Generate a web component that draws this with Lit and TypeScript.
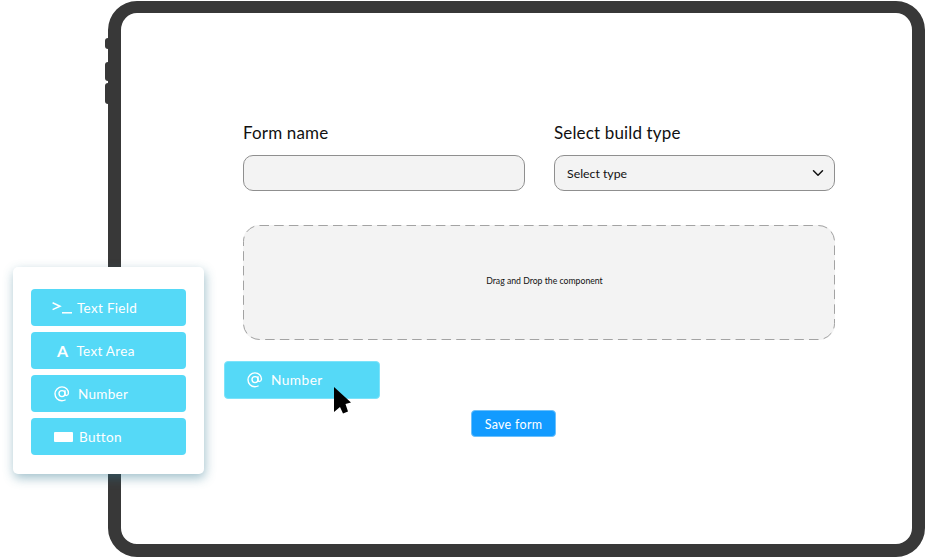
import { LitElement, html, css, svg } from "lit";
import { customElement } from "lit/decorators.js";

const atIcon = (size: number) => html`<svg class="ico" width=${size} height=${size} viewBox="0 0 16 16" fill="none" stroke="#fff" stroke-width="1.4" stroke-linecap="round">
  <circle cx="8" cy="7.6" r="3"/>
  <path d="M11 4.800v3.600c0 1.400 3 1.600 3.400-.9C14.800 3.600 11.500 .9 8 .9 4.200 .9 1 4 1 7.800c0 3.900 3.100 6.900 6.900 6.900 1.200 0 2.300-.2 3.200-.7"/>
</svg>`;

const promptIcon = html`<svg class="ico" width="20" height="13" viewBox="0 0 20 13" fill="none" stroke="#fff" stroke-width="1.500">
  <path d="M.6 1.800 8 5.200 .6 8.600" />
  <path d="M10 11.800h10" />
</svg>`;

const items = [
  { label: "Text Field", cls: "tf", icon: promptIcon },
  { label: "Text Area", cls: "ta", icon: html`<span class="big-a">A</span>` },
  { label: "Number", cls: "nu", icon: atIcon(16) },
  { label: "Button", cls: "bu", icon: html`<span class="btn-ico"></span>` },
];

@customElement("app-root")
export class AppRoot extends LitElement {
  static styles = css`
    :host {
      display: block;
      width: 925px;
      height: 557px;
      position: relative;
      overflow: hidden;
      background: #fff;
      font-family: "Lato", "Open Sans", sans-serif;
      color: #111;
    }
    .device {
      position: absolute;
      left: 108px;
      top: 1px;
      width: 817px;
      height: 556px;
      box-sizing: border-box;
      border: 13px solid #383838;
      border-top-width: 12px;
      border-radius: 29px;
      background: #fff;
      padding: 109px 77px 0 122px;
    }
    .side {
      position: absolute;
      left: -16px;
      width: 6px;
      background: #383838;
      border-radius: 3px 0 0 3px;
    }
    .s1 { top: 25px; height: 11px; }
    .s2 { top: 49px; height: 19px; }
    .s3 { top: 70px; height: 21px; }
    .fields {
      display: grid;
      grid-template-columns: 282px 281px;
      column-gap: 29px;
    }
    .field {
      display: flex;
      flex-direction: column;
      gap: 11px;
    }
    .label {
      font-size: 17px;
      line-height: 22px;
      color: #111;
      letter-spacing: 0.15px;
    }
    .input {
      box-sizing: border-box;
      height: 36px;
      background: #f3f3f3;
      border: 1px solid #8f8f8f;
      border-radius: 10px;
      display: flex;
      align-items: center;
      justify-content: space-between;
      padding: 0 10px 0 12px;
      font-size: 12.3px;
      color: #111;
    }
    .zone {
      position: relative;
      margin-top: 34px;
      height: 115px;
      box-sizing: border-box;
      background: #f3f3f3;
      border-radius: 16px;
      display: flex;
      align-items: center;
      justify-content: center;
      font-size: 8.7px;
      color: #111;
      padding: 0 0 4px 11px;
    }
    .zone svg {
      position: absolute;
      inset: 0;
    }
    .save {
      margin: 70px 0 0 228px;
      width: 85px;
      height: 27px;
      box-sizing: border-box;
      background: #129bff;
      border: 1px solid #6cc0fb;
      border-radius: 4px;
      color: #fff;
      font-size: 12.5px;
      display: flex;
      align-items: center;
      justify-content: center;
      letter-spacing: 0.3px;
      padding-top: 1px;
    }
    .palette {
      position: absolute;
      left: 13px;
      top: 267px;
      width: 191px;
      height: 207px;
      box-sizing: border-box;
      background: #fff;
      border-radius: 5px;
      box-shadow: 1px 4px 11px rgba(45, 115, 140, 0.45);
      padding: 22px 18px 0;
      display: flex;
      flex-direction: column;
      gap: 6px;
    }
    .item {
      box-sizing: border-box;
      height: 37px;
      background: #55d9f7;
      border-radius: 4px;
      display: flex;
      align-items: center;
      color: #fff;
      font-size: 13.5px;
      letter-spacing: 0.3px;
    }
    .tf { padding-left: 21px; gap: 5px; }
    .ta { padding-left: 26px; gap: 8px; }
    .nu { padding-left: 23px; gap: 8px; }
    .bu { padding-left: 23px; gap: 6px; }
    .big-a {
      font-size: 16px;
      font-weight: 700;
    }
    .btn-ico {
      width: 19px;
      height: 10px;
      background: #fff;
      border-radius: 1px;
    }
    .ico { display: block; flex: none; }
    .dragged {
      position: absolute;
      left: 224px;
      top: 361px;
      width: 156px;
      height: 38px;
      box-sizing: border-box;
      background: #55d9f7;
      border: 1px solid #7de3fa;
      border-radius: 4px;
      display: flex;
      align-items: center;
      gap: 8px;
      padding: 0 0 1px 22px;
      color: #fff;
      font-size: 13.7px;
      letter-spacing: 0.45px;
    }
    .cursor {
      position: absolute;
      left: 333px;
      top: 386px;
    }
  `;

  render() {
    return html`
      <div class="device">
        <div class="side s1"></div>
        <div class="side s2"></div>
        <div class="side s3"></div>
        <div class="fields">
          <div class="field">
            <div class="label">Form name</div>
            <div class="input"></div>
          </div>
          <div class="field">
            <div class="label">Select build type</div>
            <div class="input">
              <span>Select type</span>
              <svg width="12" height="8" viewBox="0 0 12 8" fill="none" stroke="#111" stroke-width="1.5" stroke-linecap="round" stroke-linejoin="round">
                <path d="M1.500 1.800 6 6.200l4.500-4.400" />
              </svg>
            </div>
          </div>
        </div>
        <div class="zone">
          <svg width="592" height="115" viewBox="0 0 592 115" fill="none">
            ${svg`<rect x=".5" y=".5" width="591" height="114" rx="16" stroke="#a3a3a3" stroke-width="1" stroke-dasharray="9.500 5.200" />`}
          </svg>
          <span>Drag and Drop the component</span>
        </div>
        <div class="save">Save form</div>
      </div>

      <div class="palette">
        ${items.map(
          (i) => html`<div class="item ${i.cls}">${i.icon}<span>${i.label}</span></div>`
        )}
      </div>

      <div class="dragged">${atIcon(16)}<span>Number</span></div>

      <svg class="cursor" width="19" height="29" viewBox="0 0 19 29">
        <path d="M1 1v25l6-5 3 6.500 5-2-2.500-7.500 5.500-1.500z" fill="#000" />
      </svg>
    `;
  }
}
